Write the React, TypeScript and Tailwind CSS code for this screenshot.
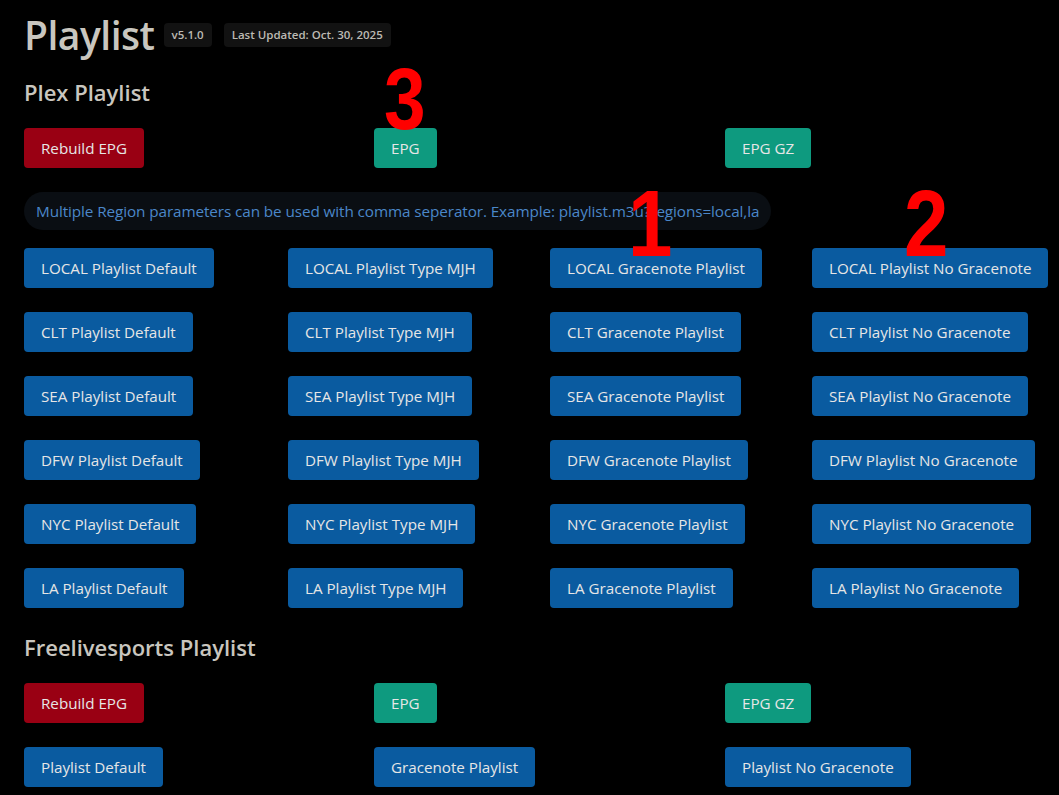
const font = { fontFamily: '"Open Sans", "Noto Sans", sans-serif' };
const markFont = { fontFamily: '"Liberation Sans", Arial, sans-serif' };

const regions = ["LOCAL", "CLT", "SEA", "DFW", "NYC", "LA"];

function Btn({ label, color }: { label: string; color: "red" | "teal" | "blue" }) {
  const bg =
    color === "red" ? "bg-[#990013]" : color === "teal" ? "bg-[#0e9a7f]" : "bg-[#0a5ba0]";
  return (
    <button
      className={`${bg} h-10 px-[17px] rounded-[4px] text-[15.2px] text-[#e6e6e6] whitespace-nowrap`}
    >
      {label}
    </button>
  );
}

function EpgRow() {
  return (
    <div className="grid grid-cols-[350px_351px_350px]">
      <div>
        <Btn label="Rebuild EPG" color="red" />
      </div>
      <div>
        <Btn label="EPG" color="teal" />
      </div>
      <div>
        <Btn label="EPG GZ" color="teal" />
      </div>
    </div>
  );
}

export default function App() {
  return (
    <div className="relative min-h-screen bg-black text-[#c9c6bf] overflow-hidden" style={font}>
      <div className="px-6 pt-[9px]">
        {/* header */}
        <div className="flex items-center">
          <h1 className="text-[39px] font-semibold leading-[52px] tracking-[-0.5px]">Playlist</h1>
          <span className="ml-[9px] bg-[#121212] text-[#bdbab3] text-[11.5px] font-semibold px-2 py-[3px] rounded">
            v5.1.0
          </span>
          <span className="ml-3 bg-[#121212] text-[#bdbab3] text-[11.5px] font-semibold px-2 py-[3px] rounded">
            Last Updated: Oct. 30, 2025
          </span>
        </div>

        <h2 className="text-[22px] font-semibold mt-[16px] mb-[21px] leading-[30px]">Plex Playlist</h2>
        <EpgRow />

        <div className="mt-[24px] inline-flex items-center h-[38px] px-3 rounded-full bg-[#0a0e13] text-[#4b87c9] text-[15.3px] tracking-[-0.1px]">
          Multiple Region parameters can be used with comma seperator. Example: playlist.m3u?regions=local,la
        </div>

        <div className="mt-[18px] grid grid-cols-[264px_262px_262px_262px] gap-y-6">
          {regions.map((r) => (
            <div key={r} className="contents">
              <div>
                <Btn label={`${r} Playlist Default`} color="blue" />
              </div>
              <div>
                <Btn label={`${r} Playlist Type MJH`} color="blue" />
              </div>
              <div>
                <Btn label={`${r} Gracenote Playlist`} color="blue" />
              </div>
              <div>
                <Btn label={`${r} Playlist No Gracenote`} color="blue" />
              </div>
            </div>
          ))}
        </div>

        <h2 className="text-[22px] font-semibold mt-[24px] mb-[21px] leading-[30px]">Freelivesports Playlist</h2>
        <EpgRow />
        <div className="mt-6 grid grid-cols-[350px_351px_350px]">
          <div>
            <Btn label="Playlist Default" color="blue" />
          </div>
          <div>
            <Btn label="Gracenote Playlist" color="blue" />
          </div>
          <div>
            <Btn label="Playlist No Gracenote" color="blue" />
          </div>
        </div>
      </div>

      {/* annotation numbers */}
      <span
        className="absolute left-[384px] top-[55px] inline-block origin-left scale-x-[0.85] text-[#ff0000] text-[88px] font-bold leading-none"
        style={markFont}
      >
        3
      </span>
      <span
        className="absolute left-[628px] top-[177px] inline-block origin-left scale-x-[0.85] text-[#ff0000] text-[94px] font-bold leading-none"
        style={markFont}
      >
        1
      </span>
      <span
        className="absolute left-[904px] top-[177px] inline-block origin-left scale-x-[0.85] text-[#ff0000] text-[94px] font-bold leading-none"
        style={markFont}
      >
        2
      </span>
    </div>
  );
}
